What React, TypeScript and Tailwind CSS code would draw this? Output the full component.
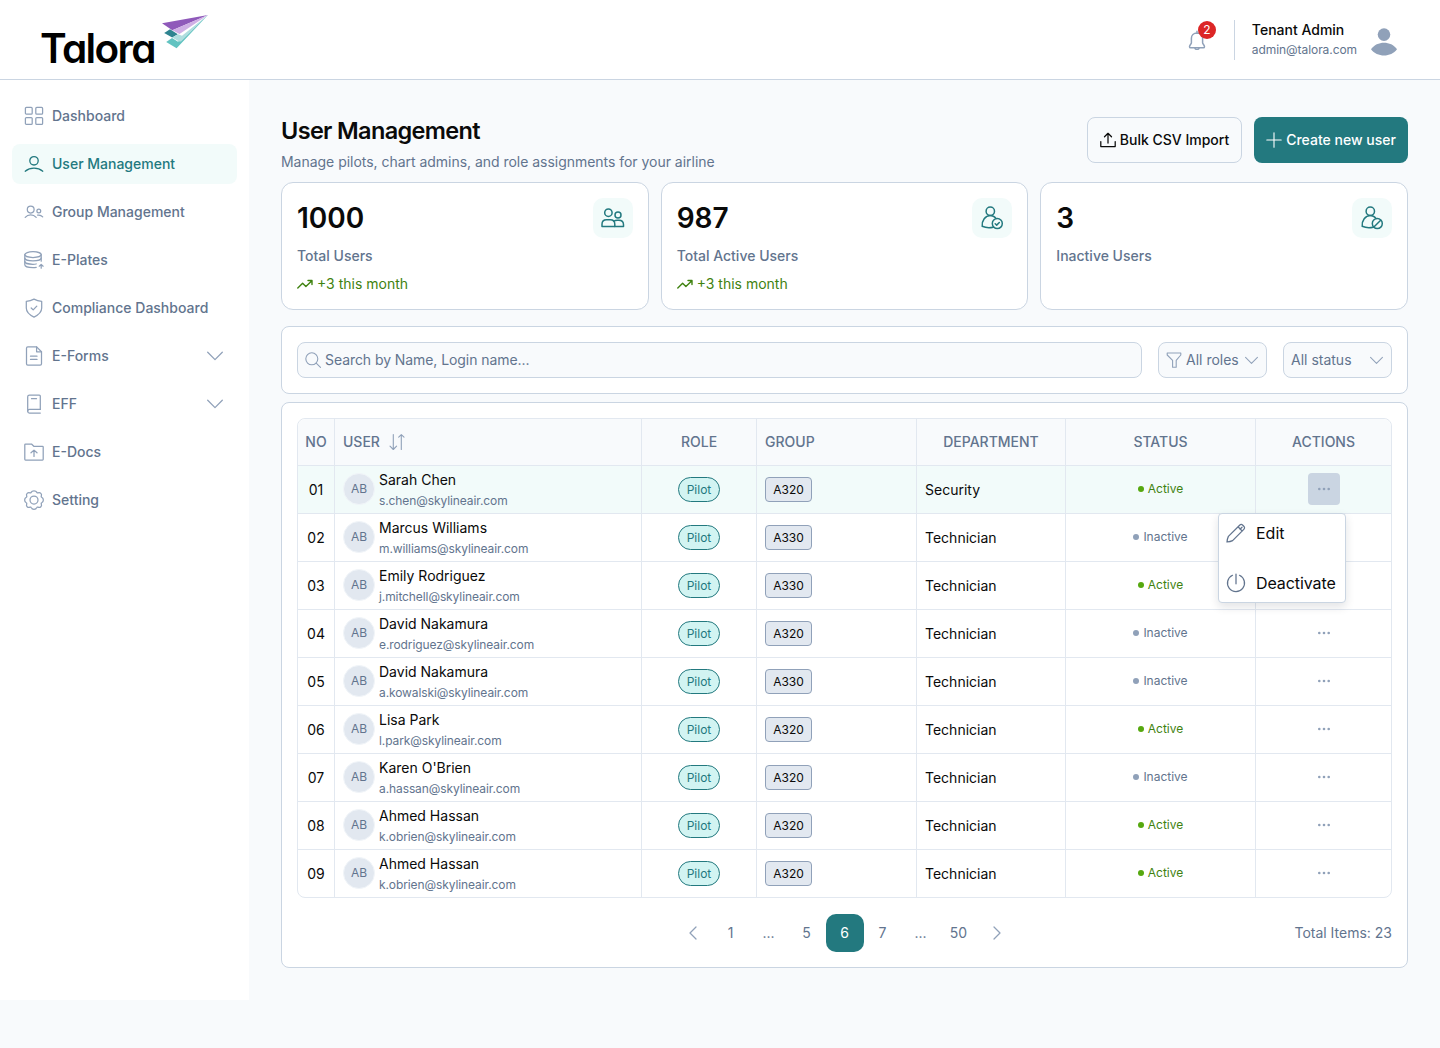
import { FC, ReactNode } from "react";

type IconProps = {
  size?: number;
  box?: number;
  stroke?: number;
  className?: string;
  children?: ReactNode;
};

const Icon: FC<IconProps> = ({
  size = 20,
  box = 20,
  stroke = 1.25,
  className = "",
  children,
}) => (
  <svg
    width={size}
    height={size}
    viewBox={`0 0 ${box} ${box}`}
    fill="none"
    stroke="currentColor"
    strokeWidth={stroke}
    strokeLinecap="round"
    strokeLinejoin="round"
    className={`shrink-0 ${className}`}
  >
    {children}
  </svg>
);

const ChevronDown: FC<{ size?: number }> = ({ size = 16 }) => (
  <Icon size={size} box={16} className="text-slate-400">
    <path d="M0.7 4.2 8 11.6l7.3-7.4" />
  </Icon>
);

const Logo: FC = () => (
  <div className="flex items-start">
    <span className="mt-[19px] w-[114px] text-[40.5px] leading-[60px] font-semibold tracking-[-0.04em] text-black [font-feature-settings:'cv11']">
      Talora
    </span>
    <svg width="48" height="36" viewBox="0 0 48 36" className="mt-[14px] ml-[7px]">
      <path d="M1 9.3 47 1 11.3 16.2Z" fill="#8f59ba" />
      <path d="M11.3 16.2 47 1 18.5 20Z" fill="#cfafe5" />
      <path d="M3.2 19 9 15.3l7.8 5-5.6 3.2Z" fill="#2f8490" />
      <path d="M5.2 28 11 24.1 17 27.8 47 1 15.6 34.2Z" fill="#62c3c1" />
      <path d="M11.2 23.5 17 20.2l4 1.6L47 1 20 27.6l-2 0Z" fill="#b0dedf" />
    </svg>
  </div>
);

type NavItem = {
  label: string;
  icon: ReactNode;
  active?: boolean;
  expandable?: boolean;
};

const navItems: NavItem[] = [
  {
    label: "Dashboard",
    icon: (
      <Icon>
        <rect x="1.4" y="1.4" width="6.8" height="6.8" rx="1" />
        <rect x="11.8" y="1.4" width="6.8" height="6.8" rx="1" />
        <rect x="1.4" y="11.6" width="6.8" height="6.8" rx="1" />
        <rect x="11.8" y="11.6" width="6.8" height="6.8" rx="1" />
      </Icon>
    ),
  },
  {
    label: "User Management",
    active: true,
    icon: (
      <Icon stroke={1.3}>
        <circle cx="10" cy="6.8" r="4.2" />
        <path d="M1.2 17.2c5-4.2 12.6-4.2 17.6 0" />
      </Icon>
    ),
  },
  {
    label: "Group Management",
    icon: (
      <Icon>
        <circle cx="6.7" cy="7.6" r="3.4" />
        <path d="M1.2 15.4c2.9-3.3 8.1-3.3 11 0" />
        <circle cx="14.8" cy="8.9" r="1.9" />
        <path d="M13.6 13.2c1.8-.5 3.7.2 5.1 1.7" />
      </Icon>
    ),
  },
  {
    label: "E-Plates",
    icon: (
      <Icon>
        <ellipse cx="9" cy="4.6" rx="8.2" ry="2.9" />
        <path d="M.8 4.6v10.2c0 1.6 3.6 2.9 8.2 2.9 1.2 0 2.3-.1 3.2-.3" />
        <path d="M.8 8c0 1.6 3.6 2.9 8.2 2.9s8.2-1.3 8.2-2.9" />
        <path d="M.8 11.4c0 1.6 3.6 2.9 8.2 2.9 1.2 0 2.3-.1 3.2-.3" />
        <path d="M17.2 4.6v6.6M17.2 18.2v-3.6M15.3 16.2l1.9-1.8 1.9 1.8" />
      </Icon>
    ),
  },
  {
    label: "Compliance Dashboard",
    icon: (
      <Icon>
        <path d="M10 1.1c2.4 1.3 5 2 7.7 2.2v6.8c0 4.2-3.4 7-7.7 9-4.3-2-7.7-4.8-7.7-9V3.3c2.7-.2 5.3-.9 7.7-2.2Z" />
        <path d="m7.2 10 2 1.9 3.6-3.8" />
      </Icon>
    ),
  },
  {
    label: "E-Forms",
    expandable: true,
    icon: (
      <Icon>
        <path d="M12.6.9H3.8c-.8 0-1.3.5-1.3 1.3v15.6c0 .8.5 1.3 1.3 1.3h12.4c.8 0 1.3-.5 1.3-1.3V5.8L12.6.9Z" />
        <path d="M12.6.9v4.9h4.9M6.5 10.2H13M6.5 13.4H13" />
      </Icon>
    ),
  },
  {
    label: "EFF",
    expandable: true,
    icon: (
      <Icon>
        <path d="M16.3 15.4V2c0-.6-.4-1-1-1H5.5C4.4 1 3.7 1.8 3.7 2.8v14.4c0 1 .8 1.8 1.8 1.8h10.8" />
        <path d="M16.3 15.4H5.5c-1 0-1.8.8-1.8 1.8M7.5 4.7h5" />
      </Icon>
    ),
  },
  {
    label: "E-Docs",
    icon: (
      <Icon>
        <path d="M.8 2.7c0-.4.3-.7.7-.7h6l2.3 2.3h8.7c.4 0 .7.3.7.7v12.3c0 .4-.3.7-.7.7h-17c-.4 0-.7-.3-.7-.7V2.700Z" />
        <path d="M10 14.4V8.3M7 10.8l3-2.7 3 2.700" />
      </Icon>
    ),
  },
  {
    label: "Setting",
    icon: (
      <Icon>
        <circle cx="10" cy="10" r="4" />
        <path d="M7.1 2.4C8.2.2 11.800.2 12.900 2.400c.2.5.600.6 1.100.4 2.300-.8 4.200 1.100 3.300 3.300-.2.5-.1.900.4 1.100 2.200 1.100 2.200 4.500 0 5.600-.5.2-.6.600-.4 1.100.9 2.300-1 4.200-3.300 3.300-.5-.2-.9-.1-1.100.4-1.100 2.300-4.700 2.300-5.800 0-.2-.5-.6-.6-1.100-.4-2.300.9-4.200-1-3.300-3.300.2-.5.1-.9-.4-1.100-2.200-1.100-2.200-4.500 0-5.600.5-.2.600-.6.400-1.100-.9-2.200 1-4.100 3.300-3.300.5.2.900.1 1.100-.4Z" />
      </Icon>
    ),
  },
];

const Sidebar: FC = () => (
  <aside className="flex h-[920px] w-[249px] shrink-0 flex-col gap-2 bg-white px-3 pt-4">
    {navItems.map((item) => (
      <a
        key={item.label}
        className={`flex h-10 items-center gap-2 rounded-lg px-3 text-sm font-medium ${
          item.active
            ? "bg-[#f2fbfa] text-[#23797f]"
            : "text-slate-500"
        }`}
      >
        <span className={item.active ? "text-[#23797f]" : "text-slate-400"}>
          {item.icon}
        </span>
        <span className="flex-1">{item.label}</span>
        {item.expandable && (
          <span className="mr-0.5">
            <ChevronDown />
          </span>
        )}
      </a>
    ))}
  </aside>
);

const Header: FC = () => (
  <header className="flex h-20 items-start justify-between border-b border-slate-300 bg-white pr-10 pl-10">
    <Logo />
    <div className="flex h-[79px] items-center">
      <div className="relative mr-[27px] text-slate-400">
        <Icon stroke={1.5} className="block">
          <path d="M10 1.2v2M10 2.9c-3.3 0-5.6 2.3-5.6 5.4v4.4c0 1.2-1.9 2.6-1.9 4 0 .7.5 1.1 1.2 1.1h12.6c.7 0 1.2-.4 1.2-1.1 0-1.4-1.9-2.8-1.9-4V8.300c0-3.100-2.300-5.400-5.600-5.400Z" />
          <path d="M8 18.2c.4 1.6 3.6 1.6 4 0" />
        </Icon>
        <span className="absolute -top-[9px] left-[11px] flex size-[18px] items-center justify-center rounded-full bg-[#dc2626] text-xs text-white">
          2
        </span>
      </div>
      <div className="h-10 w-px bg-slate-300" />
      <div className="ml-[17px] flex flex-col">
        <span className="text-sm leading-5 font-medium text-neutral-950">
          Tenant Admin
        </span>
        <span className="text-xs leading-5 tracking-[-0.006em] text-slate-500">
          admin@talora.com
        </span>
      </div>
      <svg width="32" height="32" viewBox="0 0 32 32" className="mt-[5px] ml-[11px] text-slate-400">
        <circle cx="16" cy="8.6" r="6.3" fill="currentColor" />
        <path d="M3 23.2c6-8.6 20-8.6 26 0-6 8.3-20 8.3-26 0Z" fill="currentColor" />
      </svg>
    </div>
  </header>
);

const TrendIcon: FC = () => (
  <Icon size={16} box={16} stroke={1.4}>
    <path d="M.8 12 5.6 7.2l3.3 3.3 6-5.700M11 4.500h4v4" />
  </Icon>
);

const stats = [
  {
    value: "1000",
    label: "Total Users",
    trend: "+3 this month",
    icon: (
      <Icon size={24} box={24} stroke={1.5}>
        <circle cx="7.4" cy="6.7" r="3.7" />
        <circle cx="17" cy="9.1" r="3" />
        <path d="M1 20.5v-2.2c0-2.8 2-4.5 4.6-4.5h3.6c2.6 0 4.6 1.7 4.6 4.5v2.2H1Z" />
        <path d="M13 15.2c1-.7 1.9-.9 3.2-.9h1.6c2.7 0 4.7 1.7 4.7 4.4v1.8h-8.700" />
      </Icon>
    ),
  },
  {
    value: "987",
    label: "Total Active Users",
    trend: "+3 this month",
    icon: (
      <Icon size={24} box={24} stroke={1.5}>
        <circle cx="10.3" cy="5.2" r="4.2" />
        <path d="M13.2 21.2c-3.6.8-7.8.5-11-.9-.6-5.6 3.2-10.9 8.1-10.9 2.2 0 4.2 1.1 5.7 3" />
        <circle cx="17.3" cy="17.6" r="5" />
        <path d="m15.2 17.8 1.5 1.3 2.6-2.6" />
      </Icon>
    ),
  },
  {
    value: "3",
    label: "Inactive Users",
    trend: "",
    icon: (
      <Icon size={24} box={24} stroke={1.5}>
        <circle cx="10.3" cy="5.2" r="4.2" />
        <path d="M13.2 21.2c-3.6.8-7.8.5-11-.9-.6-5.6 3.2-10.9 8.1-10.9 2.2 0 4.2 1.1 5.7 3" />
        <circle cx="17.3" cy="17.6" r="5" />
        <path d="m13.9 21 6.8-6.8" />
      </Icon>
    ),
  },
];

const StatCards: FC = () => (
  <div className="grid grid-cols-3 gap-3">
    {stats.map((stat) => (
      <div
        key={stat.label}
        className="h-32 rounded-xl border border-slate-300 bg-white p-[15px] text-sm"
      >
        <div className="flex h-10 items-center justify-between">
          <span className="text-[28px] leading-10 font-semibold text-neutral-950">
            {stat.value}
          </span>
          <span className="flex size-10 items-center justify-center rounded-[10px] bg-[#f2fbfa] text-[#23797f]">
            {stat.icon}
          </span>
        </div>
        <p className="mt-2 leading-5 font-medium text-slate-500">
          {stat.label}
        </p>
        {stat.trend && (
          <p className="mt-2 flex items-center gap-1 leading-5 text-[#3f8210]">
            <TrendIcon />
            {stat.trend}
          </p>
        )}
      </div>
    ))}
  </div>
);

const Filters: FC = () => (
  <div className="mt-4 flex gap-4 rounded-lg border border-slate-300 bg-white p-[15px] text-sm text-slate-500">
    <div className="flex h-9 flex-1 items-center gap-1 rounded-lg border border-slate-300 bg-slate-50 px-[7px]">
      <Icon size={16} box={16} stroke={1.1} className="text-slate-400">
        <circle cx="6.8" cy="6.8" r="6" />
        <path d="m11.2 11.2 4.3 4.2" />
      </Icon>
      <span className="tracking-[-0.005em]">Search by Name, Login name...</span>
    </div>
    <div className="flex h-9 w-[109px] items-center rounded-lg border border-slate-300 bg-slate-50 pr-[8px] pl-[7px]">
      <Icon size={16} box={16} stroke={1.1} className="mr-1 text-slate-400">
        <path d="M1.2 1h13.6v2l-4.6 5.4v6.8H6.600V8.400L1.200 3V1Z" />
      </Icon>
      <span className="flex-1">All roles</span>
      <ChevronDown size={13} />
    </div>
    <div className="flex h-9 w-[109px] items-center rounded-lg border border-slate-300 bg-slate-50 pr-[8px] pl-[7px]">
      <span className="flex-1">All status</span>
      <ChevronDown size={13} />
    </div>
  </div>
);

type User = {
  no: string;
  name: string;
  email: string;
  group: string;
  department: string;
  active: boolean;
};

const users: User[] = [
  { no: "01", name: "Sarah Chen", email: "s.chen@skylineair.com", group: "A320", department: "Security", active: true },
  { no: "02", name: "Marcus Williams", email: "m.williams@skylineair.com", group: "A330", department: "Technician", active: false },
  { no: "03", name: "Emily Rodriguez", email: "j.mitchell@skylineair.com", group: "A330", department: "Technician", active: true },
  { no: "04", name: "David Nakamura", email: "e.rodriguez@skylineair.com", group: "A320", department: "Technician", active: false },
  { no: "05", name: "David Nakamura", email: "a.kowalski@skylineair.com", group: "A330", department: "Technician", active: false },
  { no: "06", name: "Lisa Park", email: "l.park@skylineair.com", group: "A320", department: "Technician", active: true },
  { no: "07", name: "Karen O'Brien", email: "a.hassan@skylineair.com", group: "A320", department: "Technician", active: false },
  { no: "08", name: "Ahmed Hassan", email: "k.obrien@skylineair.com", group: "A320", department: "Technician", active: true },
  { no: "09", name: "Ahmed Hassan", email: "k.obrien@skylineair.com", group: "A320", department: "Technician", active: true },
];

const ActionMenu: FC = () => (
  <div className="absolute top-[47px] left-[-38px] z-10 flex h-[90px] w-32 flex-col justify-between rounded border border-slate-300 bg-white p-[7px] text-base text-neutral-950 shadow-[0_4px_10px_rgba(15,23,42,0.12)]">
    <button className="flex h-6 items-center gap-2.5">
      <Icon className="text-slate-500">
        <path d="M1 19c.2-2.2.6-4 1.4-5.6L13.6 2.200c1-1 2.200-1 3.200 0l1 1c1 1 1 2.200 0 3.200L6.600 17.600C5 18.400 3.200 18.800 1 19ZM12 3.800 16.200 8M14 6.200l2-2" />
      </Icon>
      Edit
    </button>
    <button className="flex h-6 items-center gap-2.5 tracking-[-0.005em]">
      <Icon className="text-slate-500">
        <path d="M10 1v9.8M6.5 2.3a8.5 8.5 0 1 0 7 0" />
      </Icon>
      Deactivate
    </button>
  </div>
);

const Dots: FC = () => (
  <svg width="14" height="4" viewBox="0 0 14 4" className="text-slate-400">
    <circle cx="2.3" cy="2" r="1.3" fill="currentColor" />
    <circle cx="7" cy="2" r="1.3" fill="currentColor" />
    <circle cx="11.7" cy="2" r="1.3" fill="currentColor" />
  </svg>
);

const headCell = "h-[47px] border-b border-slate-200 bg-slate-50 font-medium";

const UserTable: FC = () => (
  <div className="rounded-lg border border-slate-200">
    <table className="w-full table-fixed border-separate border-spacing-0 text-sm">
      <colgroup>
        <col className="w-[37px]" />
        <col className="w-[307px]" />
        <col className="w-[115px]" />
        <col className="w-[160px]" />
        <col className="w-[149px]" />
        <col className="w-[190px]" />
        <col className="w-[135px]" />
      </colgroup>
      <thead className="text-slate-500">
        <tr>
          <th className={`${headCell} rounded-tl-lg border-r`}>NO</th>
          <th className={`${headCell} border-r`}>
            <div className="flex items-center gap-2 pl-2">
              USER
              <Icon size={18} box={18} stroke={1.1} className="text-slate-400">
                <path d="M5.3 1.6v14.8M2 13.2l3.3 3.3 3.3-3.3M13.3 16.400V1.600M10.700 4.200l2.600-2.600L16 4.200" />
              </Icon>
            </div>
          </th>
          <th className={`${headCell} border-r`}>ROLE</th>
          <th className={`${headCell} border-r pl-2 text-left`}>GROUP</th>
          <th className={`${headCell} border-r`}>DEPARTMENT</th>
          <th className={`${headCell} border-r`}>STATUS</th>
          <th className={`${headCell} rounded-tr-lg`}>ACTIONS</th>
        </tr>
      </thead>
      <tbody className="text-neutral-950">
        {users.map((user, index) => {
          const last = index === users.length - 1;
          const cell = `border-slate-200 ${last ? "h-[47px]" : "h-12 border-b"}`;
          return (
            <tr key={user.no} className={index === 0 ? "bg-[#f2fbfa]" : ""}>
              <td className={`${cell} border-r text-center`}>{user.no}</td>
              <td className={`${cell} border-r pb-px`}>
                <div className="flex items-center gap-1 pl-2">
                  <span className="flex size-8 items-center justify-center rounded-full border border-slate-100 bg-slate-200 text-xs text-slate-500">
                    AB
                  </span>
                  <div className="flex flex-col">
                    <span className="leading-6">{user.name}</span>
                    <span className="text-xs leading-[18px] tracking-[-0.008em] text-slate-500">
                      {user.email}
                    </span>
                  </div>
                </div>
              </td>
              <td className={`${cell} border-r`}>
                <div className="flex justify-center">
                  <span className="flex h-[25px] w-[42px] items-center justify-center rounded-full border border-[#23797f] bg-[#d2f4f2] text-xs text-[#23797f]">
                    Pilot
                  </span>
                </div>
              </td>
              <td className={`${cell} border-r`}>
                <div className="flex pl-2">
                  <span className="flex h-[25px] w-[47px] items-center justify-center rounded border border-slate-400 bg-slate-200 text-xs">
                    {user.group}
                  </span>
                </div>
              </td>
              <td className={`${cell} border-r pl-2`}>{user.department}</td>
              <td className={`${cell} border-r pb-px`}>
                <div
                  className={`flex items-center justify-center gap-1 text-xs ${
                    user.active ? "text-[#3f8210]" : "text-slate-500"
                  }`}
                >
                  <span
                    className={`size-1.5 rounded-full ${
                      user.active ? "bg-[#56a80f]" : "bg-slate-400"
                    }`}
                  />
                  {user.active ? "Active" : "Inactive"}
                </div>
              </td>
              <td className={`${cell} relative pb-px`}>
                <div className="flex justify-center">
                  <button
                    className={`flex size-8 items-center justify-center rounded ${
                      index === 0 ? "bg-slate-300" : ""
                    }`}
                  >
                    <Dots />
                  </button>
                </div>
                {index === 0 && <ActionMenu />}
              </td>
            </tr>
          );
        })}
      </tbody>
    </table>
  </div>
);

const pages = ["1", "...", "5", "6", "7", "...", "50"];

const Pagination: FC = () => (
  <div className="mt-4 grid grid-cols-[1fr_auto_1fr] items-center text-sm text-slate-500">
    <span />
    <div className="flex">
      <button className="flex size-[38px] items-center justify-center text-slate-400">
        <Icon size={16} box={16}>
          <path d="M11 2 5 8l6 6" />
        </Icon>
      </button>
      {pages.map((page, index) => (
        <button
          key={index}
          className={`flex size-[38px] items-center justify-center rounded-[10px] ${
            page === "6" ? "bg-[#23797f] text-white" : ""
          }`}
        >
          {page}
        </button>
      ))}
      <button className="flex size-[38px] items-center justify-center text-slate-400">
        <Icon size={16} box={16}>
          <path d="m5 2 6 6-6 6" />
        </Icon>
      </button>
    </div>
    <span className="text-right">Total Items: 23</span>
  </div>
);

const App: FC = () => (
  <div className="min-h-[1048px] bg-slate-50 font-['Inter',sans-serif] antialiased">
    <Header />
    <div className="flex">
      <Sidebar />
      <main className="flex-1 px-8 pt-8">
        <div className="flex h-[70px] items-start justify-between">
          <div>
            <h1 className="text-[23.5px] leading-[38px] font-semibold tracking-[-0.028em] text-neutral-950">
              User Management
            </h1>
            <p className="mt-0.5 text-sm leading-5 tracking-[-0.002em] text-slate-500">
              Manage pilots, chart admins, and role assignments for your airline
            </p>
          </div>
          <div className="mt-[5px] flex gap-3 text-sm font-medium">
            <button className="flex h-[46px] w-[155px] items-center justify-center gap-1 rounded-lg border border-slate-300 bg-slate-50 text-neutral-950">
              <Icon size={16} box={16}>
                <path d="M8 11V1.5M4.5 4.8 8 1.3l3.5 3.5M.8 9.500v5h14.400v-5" />
              </Icon>
              Bulk CSV Import
            </button>
            <button className="flex h-[46px] w-[154px] items-center justify-center gap-1 rounded-lg bg-[#23797f] text-white">
              <Icon size={16} box={16} stroke={1.1}>
                <path d="M8 .8v14.4M.8 8h14.4" />
              </Icon>
              Create new user
            </button>
          </div>
        </div>
        <StatCards />
        <Filters />
        <div className="mt-2 rounded-lg border border-slate-300 bg-white p-[15px]">
          <UserTable />
          <Pagination />
        </div>
      </main>
    </div>
  </div>
);

export default App;
